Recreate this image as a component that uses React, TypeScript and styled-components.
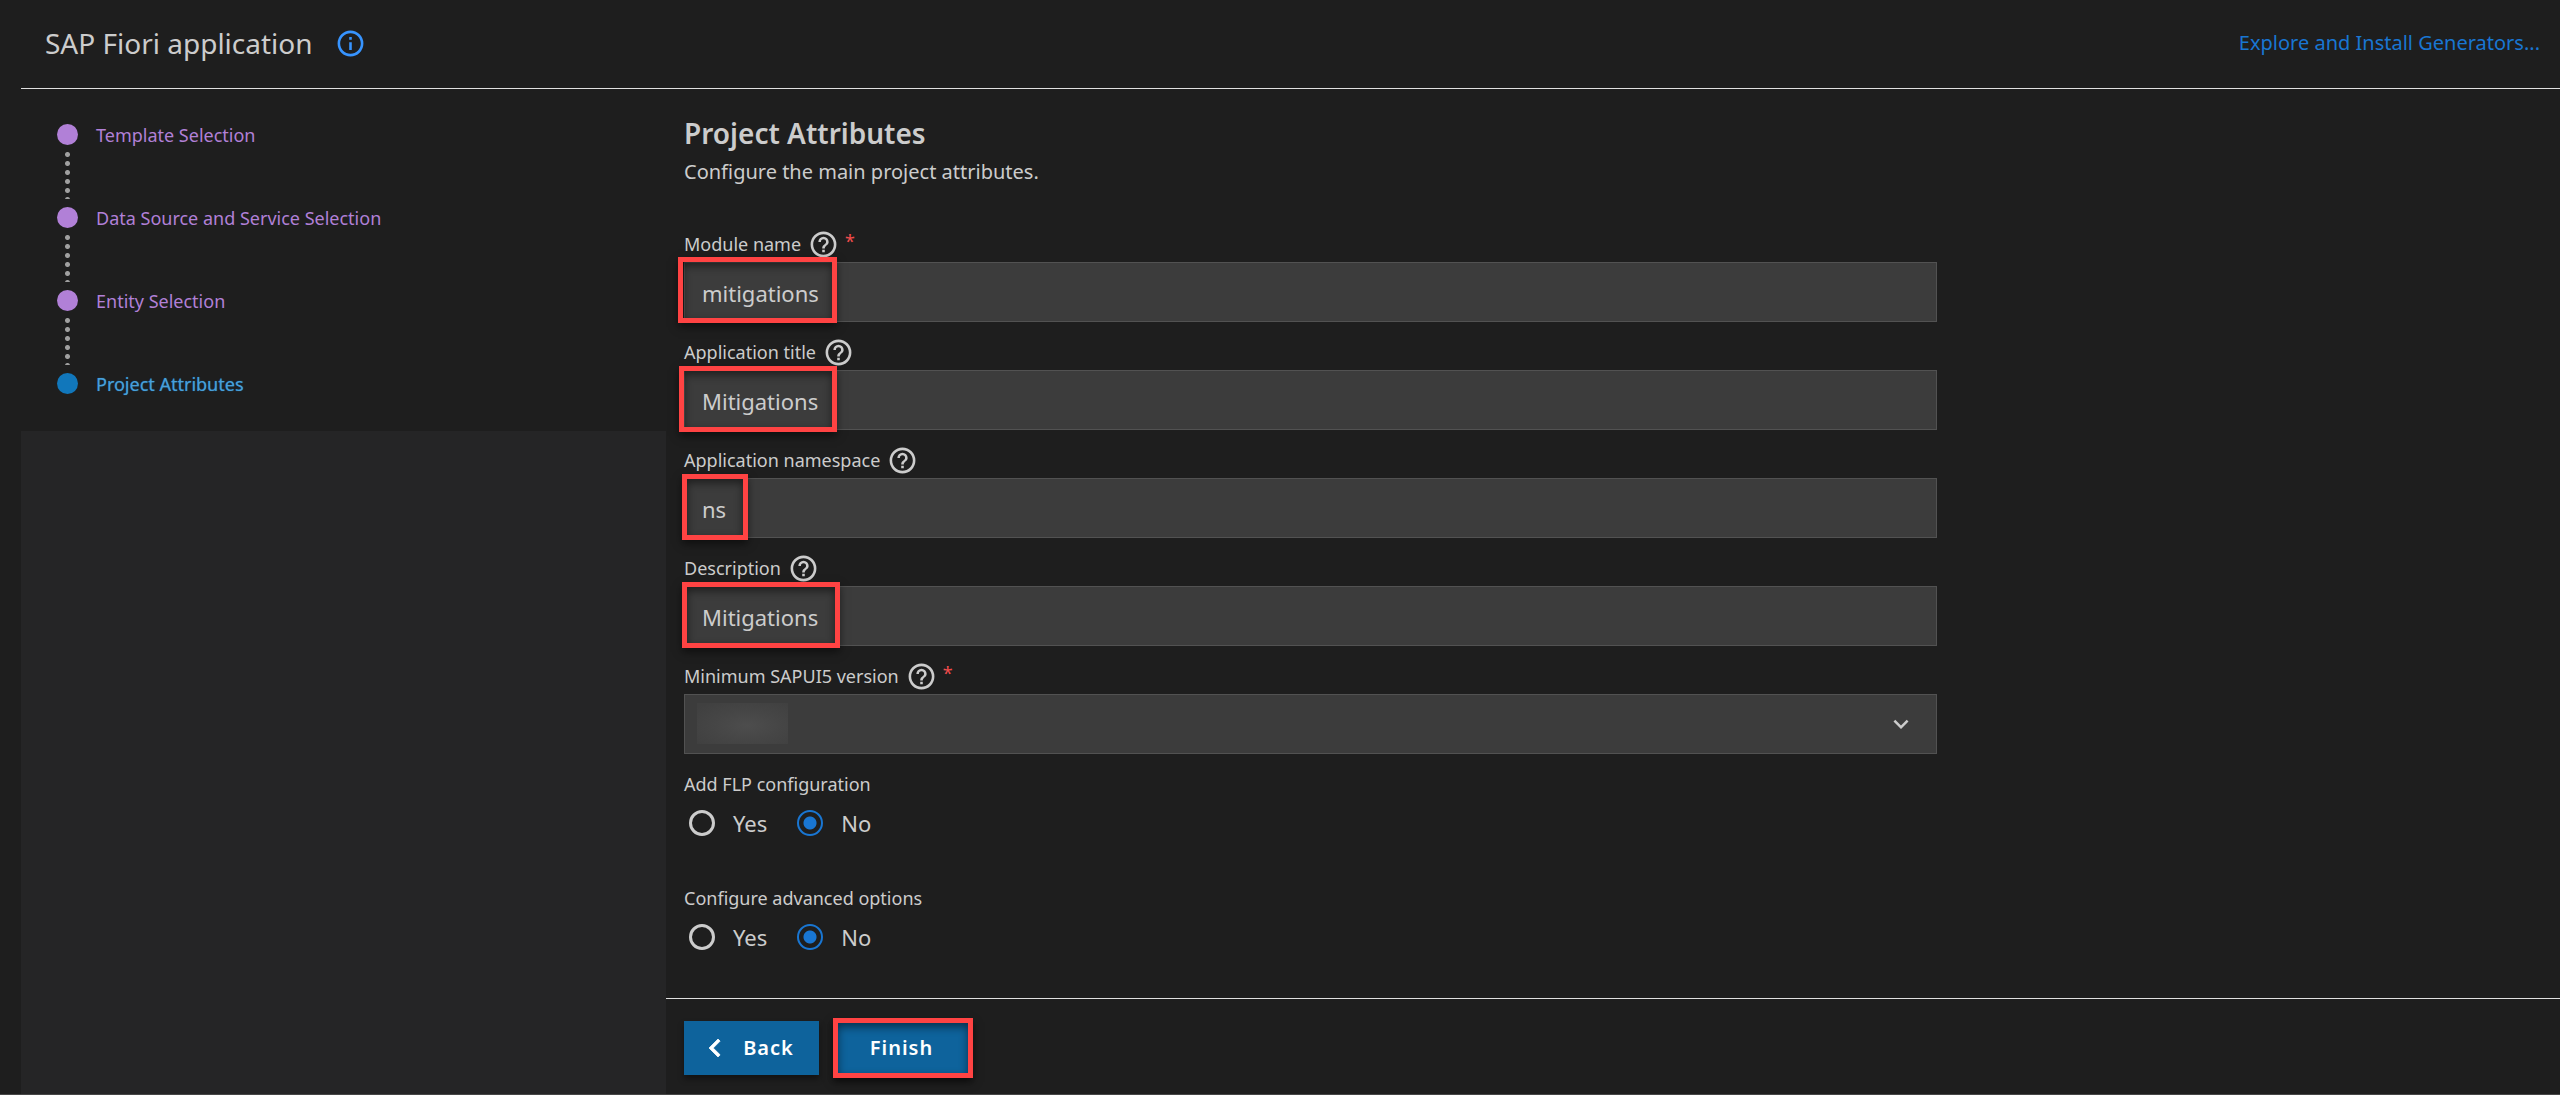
import React, { useState } from "react";
import styled, { createGlobalStyle } from "styled-components";

const GlobalStyle = createGlobalStyle`
  * { box-sizing: border-box; }
  body {
    margin: 0;
    background: #1e1e1e;
    color: #cccccc;
    font-family: "Segoe UI", "Noto Sans", sans-serif;
  }
  button, input, select { font-family: inherit; }
`;

const Page = styled.div`
  display: flex;
  flex-direction: column;
  min-height: 100vh;
  border-bottom: 1px solid #474747;
`;

const Header = styled.header`
  display: flex;
  align-items: center;
  height: 89px;
  margin-left: 21px;
  padding: 0 20px 2px 24px;
  border-bottom: 1px solid #e0e0e0;
`;

const AppTitle = styled.h1`
  margin: 0 22px 0 0;
  font-size: 28px;
  line-height: 40px;
  font-weight: 400;
`;

const InfoButton = styled.button`
  display: flex;
  padding: 0;
  border: 0;
  background: none;
  color: #3794ff;
`;

const HeaderLink = styled.a`
  margin-left: auto;
  font-size: 20px;
  line-height: 28px;
  color: #1976d2;
  text-decoration: none;
`;

const Body = styled.div`
  display: flex;
  flex: 1;
`;

const Sidebar = styled.nav`
  display: flex;
  flex-direction: column;
  flex: 0 0 645px;
  margin-left: 21px;
`;

const Steps = styled.ol`
  list-style: none;
  margin: 0;
  padding: 35px 0 36px 36px;
`;

const Step = styled.li<{ $active?: boolean }>`
  display: grid;
  grid-template-columns: 21px 1fr;
  column-gap: 18px;
  font-size: 18px;
  line-height: 22px;
  color: ${(p) => (p.$active ? "#4a9fd8" : "#b180d7")};
  text-shadow: ${(p) => (p.$active ? "0 0 1px #1177bb" : "none")};
`;

const StepDot = styled.span<{ $active?: boolean }>`
  width: 21px;
  height: 21px;
  border-radius: 50%;
  background: ${(p) => (p.$active ? "#1177bb" : "#b180d7")};
`;

const StepTrail = styled.span`
  justify-self: center;
  width: 5px;
  height: 49px;
  margin: 4px 0 8px;
  background: radial-gradient(circle at center, #a0a0a0 2px, transparent 3px) 0 0 / 5px 9px;
`;

const SidebarPanel = styled.div`
  flex: 1;
  background: #252526;
`;

const Main = styled.main`
  display: flex;
  flex-direction: column;
  flex: 1;
  min-width: 0;
`;

const Content = styled.div`
  flex: 1;
  padding: 26px 0 0 18px;
`;

const Heading = styled.h2`
  margin: 0;
  font-size: 28px;
  line-height: 36px;
  font-weight: 600;
`;

const Intro = styled.p`
  margin: 5px 0 0;
  font-size: 20px;
  line-height: 32px;
`;

const Form = styled.form`
  display: flex;
  flex-direction: column;
  width: 66.8%;
  margin-top: 38px;
`;

const Field = styled.div`
  display: flex;
  flex-direction: column;
  padding-bottom: 12px;
`;

const LabelRow = styled.div`
  display: flex;
  align-items: center;
  height: 36px;
`;

const Label = styled.label`
  font-size: 18px;
  line-height: 26px;
`;

const HelpButton = styled.button`
  display: flex;
  margin-left: 7px;
  padding: 0;
  border: 0;
  background: none;
  color: inherit;
`;

const Required = styled.span`
  margin-left: 6px;
  padding-bottom: 6px;
  font-size: 18px;
  line-height: 18px;
  color: #f14c4c;
`;

const Control = styled.div`
  position: relative;
`;

const TextInput = styled.input`
  display: block;
  width: 100%;
  height: 60px;
  padding: 2px 17px 0;
  border: 1px solid #525252;
  border-radius: 0;
  outline: none;
  background: #3c3c3c;
  color: #cccccc;
  font-size: 22px;
`;

const Select = styled.select`
  appearance: none;
  display: block;
  width: 100%;
  height: 60px;
  padding: 0 17px;
  border: 1px solid #525252;
  border-radius: 0;
  background: #3c3c3c;
  color: #cccccc;
  font-size: 22px;
`;

const HiddenValue = styled.span`
  position: absolute;
  left: 13px;
  top: 9px;
  width: 91px;
  height: 41px;
  background: radial-gradient(ellipse at 55% 55%, #4d4d4d 0%, #464646 45%, #404040 90%);
  pointer-events: none;
`;

const SelectArrow = styled.span`
  position: absolute;
  right: 21px;
  top: 15px;
  display: flex;
  pointer-events: none;
`;

const Highlight = styled.span<{ $left: number; $width: number; $top?: number; $height?: number }>`
  position: absolute;
  left: ${(p) => p.$left}px;
  top: ${(p) => p.$top ?? -4}px;
  width: ${(p) => p.$width}px;
  height: ${(p) => p.$height ?? 66}px;
  border: 5px solid #ff4343;
  box-shadow: 0 4px 8px rgba(0, 0, 0, 0.5), inset 0 4px 8px rgba(0, 0, 0, 0.5);
  pointer-events: none;
`;

const RadioGroup = styled.fieldset`
  margin: 0;
  padding: 0 0 36px;
  border: 0;
  min-width: 0;
`;

const Legend = styled.legend`
  display: block;
  padding: 5px 0;
  font-size: 18px;
  line-height: 26px;
`;

const RadioRow = styled.div`
  display: flex;
  gap: 30px;
  padding-left: 5px;
`;

const RadioLabel = styled.label`
  display: flex;
  align-items: center;
  gap: 18px;
  font-size: 22px;
  line-height: 42px;
`;

const Radio = styled.input`
  appearance: none;
  flex: none;
  width: 26px;
  height: 26px;
  margin: 0;
  border: 3px solid #cccccc;
  border-radius: 50%;
  &:checked {
    border: 2px solid #1976d2;
    background: radial-gradient(circle, #1976d2 6px, transparent 7px);
  }
`;

const Footer = styled.footer`
  display: flex;
  align-items: center;
  gap: 15px;
  height: 96px;
  padding: 3px 0 0 18px;
  border-top: 1px solid #e0e0e0;
`;

const ActionWrap = styled.div`
  position: relative;
`;

const ActionButton = styled.button<{ $withIcon?: boolean }>`
  display: flex;
  align-items: center;
  justify-content: center;
  gap: 10px;
  width: 135px;
  height: 54px;
  padding: ${(p) => (p.$withIcon ? "0 12px 0 0" : "0")};
  border: 0;
  background: #0e639c;
  color: #ffffff;
  font-size: 20px;
  line-height: 28px;
  font-weight: 600;
  letter-spacing: 1px;
  box-shadow: 0 4px 6px rgba(0, 0, 0, 0.4);
`;

const iconPaths = {
  help: "M11,18H13V16H11V18M12,2A10,10 0 0,0 2,12A10,10 0 0,0 12,22A10,10 0 0,0 22,12A10,10 0 0,0 12,2M12,20C7.59,20 4,16.41 4,12C4,7.59 7.59,4 12,4C16.41,4 20,7.59 20,12C20,16.41 16.41,20 12,20M12,6A4,4 0 0,0 8,10H10A2,2 0 0,1 12,8A2,2 0 0,1 14,10C14,12 11,11.75 11,15H13C13,12.75 16,12.5 16,10A4,4 0 0,0 12,6Z",
  info: "M11,9H13V7H11M12,20C7.59,20 4,16.41 4,12C4,7.59 7.59,4 12,4C16.41,4 20,7.59 20,12C20,16.41 16.41,20 12,20M12,2A10,10 0 0,0 2,12A10,10 0 0,0 12,22A10,10 0 0,0 22,12A10,10 0 0,0 12,2M11,17H13V11H11V17Z",
  down: "M7.41,8.58L12,13.17L16.59,8.58L18,10L12,16L6,10L7.41,8.58Z",
  left: "M15.41,16.58L10.83,12L15.41,7.41L14,6L8,12L14,18L15.41,16.58Z",
};

const Icon = ({ name, size = 30 }: { name: keyof typeof iconPaths; size?: number }) => (
  <svg
    width={size}
    height={size}
    viewBox="0 0 24 24"
    fill="currentColor"
    stroke={name === "left" ? "currentColor" : "none"}
    strokeWidth={0.5}
    aria-hidden="true"
  >
    <path d={iconPaths[name]} />
  </svg>
);

const steps = [
  "Template Selection",
  "Data Source and Service Selection",
  "Entity Selection",
  "Project Attributes",
];

const fields = [
  { id: "module", label: "Module name", value: "mitigations", required: true, left: -6, width: 159, top: -5 },
  { id: "title", label: "Application title", value: "Mitigations", left: -5, width: 158 },
  { id: "namespace", label: "Application namespace", value: "ns", left: -2, width: 66 },
  { id: "description", label: "Description", value: "Mitigations", left: -2, width: 158 },
];

const FieldLabel = ({ id, text, required }: { id: string; text: string; required?: boolean }) => (
  <LabelRow>
    <Label htmlFor={id}>{text}</Label>
    <HelpButton type="button" aria-label={`Help for ${text}`}>
      <Icon name="help" size={31} />
    </HelpButton>
    {required && <Required>*</Required>}
  </LabelRow>
);

const YesNo = ({ name, label }: { name: string; label: string }) => {
  const [value, setValue] = useState("No");
  return (
    <RadioGroup>
      <Legend>{label}</Legend>
      <RadioRow>
        {["Yes", "No"].map((option) => (
          <RadioLabel key={option}>
            <Radio type="radio" name={name} checked={value === option} onChange={() => setValue(option)} />
            {option}
          </RadioLabel>
        ))}
      </RadioRow>
    </RadioGroup>
  );
};

export default function App() {
  return (
    <>
      <GlobalStyle />
      <Page>
        <Header>
          <AppTitle>SAP Fiori application</AppTitle>
          <InfoButton type="button" aria-label="Information">
            <Icon name="info" size={31} />
          </InfoButton>
          <HeaderLink href="#generators">Explore and Install Generators...</HeaderLink>
        </Header>
        <Body>
          <Sidebar>
            <Steps>
              {steps.map((step, i) => {
                const active = i === steps.length - 1;
                return (
                  <Step key={step} $active={active}>
                    <StepDot $active={active} />
                    <span>{step}</span>
                    {!active && <StepTrail />}
                  </Step>
                );
              })}
            </Steps>
            <SidebarPanel />
          </Sidebar>
          <Main>
            <Content>
              <Heading>Project Attributes</Heading>
              <Intro>Configure the main project attributes.</Intro>
              <Form>
                {fields.map((f) => (
                  <Field key={f.id}>
                    <FieldLabel id={f.id} text={f.label} required={f.required} />
                    <Control>
                      <TextInput id={f.id} type="text" defaultValue={f.value} />
                      <Highlight $left={f.left} $width={f.width} $top={f.top} />
                    </Control>
                  </Field>
                ))}
                <Field>
                  <FieldLabel id="version" text="Minimum SAPUI5 version" required />
                  <Control>
                    <Select id="version" />
                    <HiddenValue />
                    <SelectArrow>
                      <Icon name="down" />
                    </SelectArrow>
                  </Control>
                </Field>
                <YesNo name="flp" label="Add FLP configuration" />
                <YesNo name="advanced" label="Configure advanced options" />
              </Form>
            </Content>
            <Footer>
              <ActionButton type="button" $withIcon>
                <Icon name="left" size={36} />
                Back
              </ActionButton>
              <ActionWrap>
                <ActionButton type="button">Finish</ActionButton>
                <Highlight $left={-1} $width={140} $top={-3} $height={60} />
              </ActionWrap>
            </Footer>
          </Main>
        </Body>
      </Page>
    </>
  );
}
